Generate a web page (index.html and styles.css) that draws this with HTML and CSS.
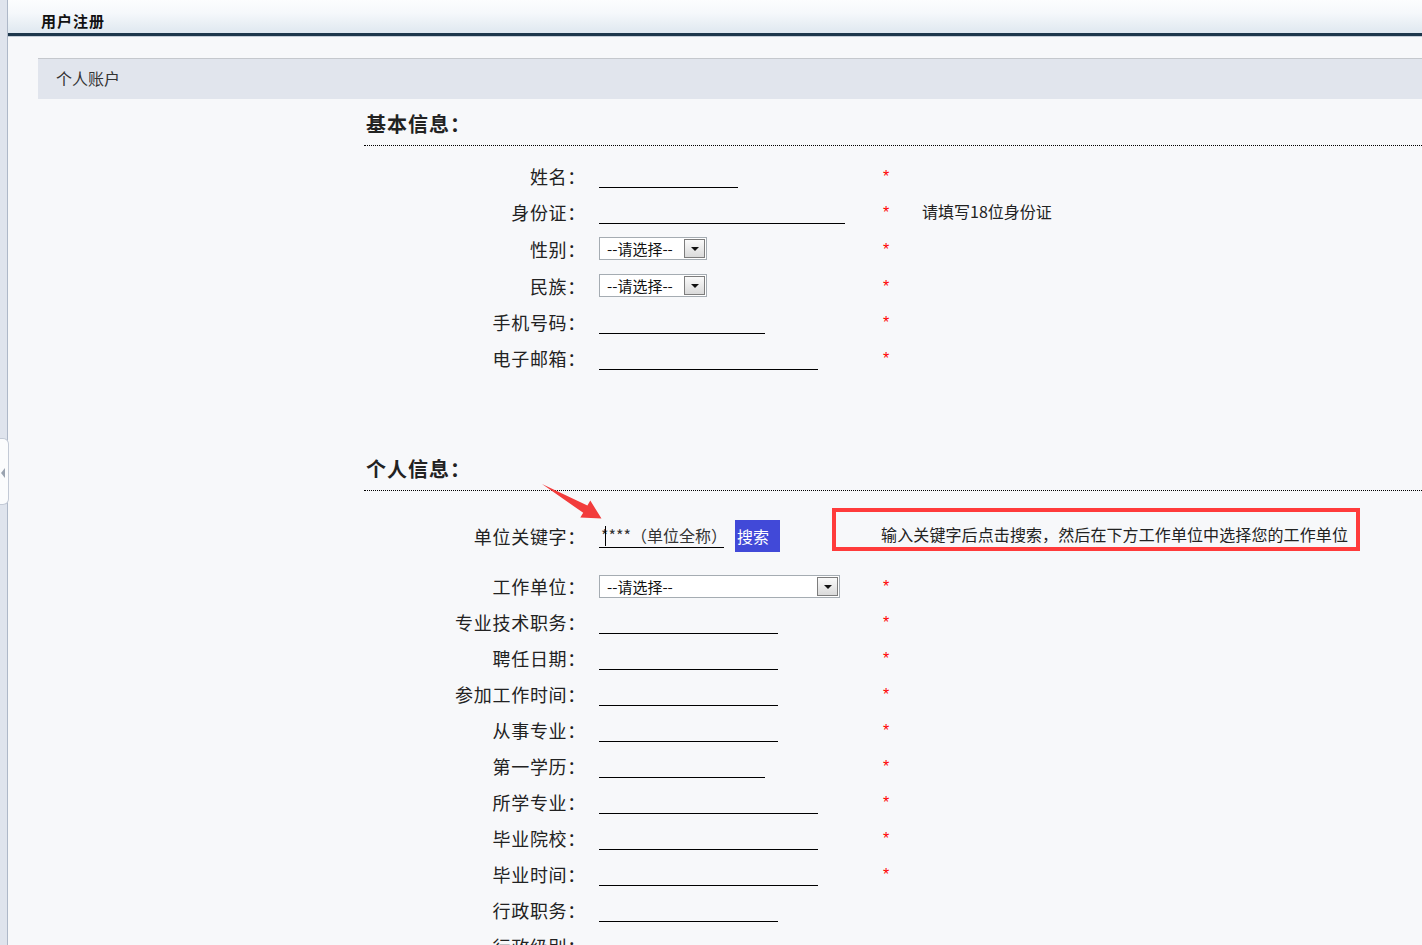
FILE: index.html
```html
<!DOCTYPE html>
<html lang="zh-CN">
  <head>
    <meta charset="UTF-8" />
    <meta name="viewport" content="width=device-width, initial-scale=1.0" />
    <title>用户注册</title>
    <link rel="stylesheet" href="styles.css">
  </head>
  <body>
    <div class="frame">
      <!-- 左侧折叠条 -->
      <div class="side"><span class="side-tab"></span></div>

      <div class="main">
        <div class="topbar"><h1>用户注册</h1></div>
        <div class="tab-bar">个人账户</div>

        <form class="reg-form" id="regForm">
          <h2 class="group-title">基本信息：</h2>
          <div class="rows">
            <div class="row">
              <label>姓名：</label>
              <div class="field"><input type="text" class="line" style="width: 139px" /></div>
              <span class="star">*</span>
            </div>
            <div class="row">
              <label>身份证：</label>
              <div class="field"><input type="text" class="line" style="width: 246px" /></div>
              <span class="star">*</span>
              <span class="hint">请填写18位身份证</span>
            </div>
            <div class="row row-select">
              <label>性别：</label>
              <div class="field">
                <div class="select"><span class="select-text">--请选择--</span><span class="select-btn"></span></div>
              </div>
              <span class="star">*</span>
            </div>
            <div class="row row-select">
              <label>民族：</label>
              <div class="field">
                <div class="select"><span class="select-text">--请选择--</span><span class="select-btn"></span></div>
              </div>
              <span class="star">*</span>
            </div>
            <div class="row">
              <label>手机号码：</label>
              <div class="field"><input type="text" class="line" style="width: 166px" /></div>
              <span class="star">*</span>
            </div>
            <div class="row">
              <label>电子邮箱：</label>
              <div class="field"><input type="text" class="line" style="width: 219px" /></div>
              <span class="star">*</span>
            </div>
          </div>

          <h2 class="group-title group-second">个人信息：</h2>
          <div class="rows">
            <div class="row row-keyword">
              <label>单位关键字：</label>
              <div class="field field-wide">
                <div class="keyword"><span class="caret"></span>****（单位全称）</div>
                <button type="button" class="search-btn">搜索</button>
                <div class="notice">输入关键字后点击搜索，然后在下方工作单位中选择您的工作单位</div>
              </div>
            </div>
            <div class="row">
              <label>工作单位：</label>
              <div class="field">
                <div class="select select-wide"><span class="select-text">--请选择--</span><span class="select-btn"></span></div>
              </div>
              <span class="star">*</span>
            </div>
            <div class="row">
              <label>专业技术职务：</label>
              <div class="field"><input type="text" class="line" style="width: 179px" /></div>
              <span class="star">*</span>
            </div>
            <div class="row">
              <label>聘任日期：</label>
              <div class="field"><input type="text" class="line" style="width: 179px" /></div>
              <span class="star">*</span>
            </div>
            <div class="row">
              <label>参加工作时间：</label>
              <div class="field"><input type="text" class="line" style="width: 179px" /></div>
              <span class="star">*</span>
            </div>
            <div class="row">
              <label>从事专业：</label>
              <div class="field"><input type="text" class="line" style="width: 179px" /></div>
              <span class="star">*</span>
            </div>
            <div class="row">
              <label>第一学历：</label>
              <div class="field"><input type="text" class="line" style="width: 166px" /></div>
              <span class="star">*</span>
            </div>
            <div class="row">
              <label>所学专业：</label>
              <div class="field"><input type="text" class="line" style="width: 219px" /></div>
              <span class="star">*</span>
            </div>
            <div class="row">
              <label>毕业院校：</label>
              <div class="field"><input type="text" class="line" style="width: 219px" /></div>
              <span class="star">*</span>
            </div>
            <div class="row">
              <label>毕业时间：</label>
              <div class="field"><input type="text" class="line" style="width: 219px" /></div>
              <span class="star">*</span>
            </div>
            <div class="row">
              <label>行政职务：</label>
              <div class="field"><input type="text" class="line" style="width: 179px" /></div>
            </div>
            <div class="row">
              <label>行政级别：</label>
              <div class="field"></div>
            </div>
          </div>
        </form>
      </div>

      <!-- 红色提示箭头 -->
      <svg class="arrow" width="64" height="40" viewBox="0 0 64 40">
        <polygon points="2,2 43.2,30.8 40.3,35.6 61.5,36.5 50.3,18.6 47.4,23.6" fill="#f23c3c" />
      </svg>
    </div>
  </body>
</html>
```

FILE: styles.css
```css
* {
  box-sizing: border-box;
}

html,
body {
  margin: 0;
  padding: 0;
  height: 100%;
  overflow: hidden;
}

body {
  font-family: "Noto Sans CJK SC", "Liberation Sans", sans-serif;
  color: #222;
  background: #f7f8fa;
}

.frame {
  position: relative;
  display: flex;
  min-height: 945px;
}

/* 左侧条 */
.side {
  position: relative;
  flex: 0 0 8px;
  background: #dfe4ed;
  border-right: 1px solid #aeb8c8;
}

.side-tab {
  position: absolute;
  top: 438px;
  left: 0;
  width: 9px;
  height: 67px;
  background: #fbfcfd;
  border: 1px solid #c3cad6;
  border-left: none;
  border-radius: 0 6px 6px 0;
}

.side-tab::before {
  content: "";
  position: absolute;
  top: 29px;
  left: 1px;
  border-top: 5px solid transparent;
  border-bottom: 5px solid transparent;
  border-right: 4px solid #9aa3b0;
}

.main {
  flex: 1;
  min-width: 0;
}

/* 顶部标题栏 */
.topbar {
  height: 36px;
  background: linear-gradient(to bottom, #fcfdfe 0%, #f5f8fb 40%, #dfe8f0 100%);
  border-bottom: 3px solid #1d374c;
  box-shadow: 0 1px 0 #c4cdd7;
}

.topbar h1 {
  margin: 0;
  padding: 6px 0 0 33px;
  font-size: 15px;
  line-height: 30px;
  letter-spacing: 1px;
  font-weight: bold;
  color: #111;
}

.tab-bar {
  margin: 22px 0 0 30px;
  height: 41px;
  padding-left: 18px;
  background: #e1e5ed;
  border-top: 1px solid #c5c8cd;
  font-size: 16px;
  line-height: 39px;
  color: #333;
}

.reg-form {
  margin-left: 356px;
}

.group-title {
  margin: 0;
  padding: 12px 0 8px 2px;
  font-size: 20px;
  line-height: 26px;
  letter-spacing: 1px;
  font-weight: bold;
  color: #222;
  border-bottom: 1px dotted #000;
}

.group-second {
  margin-top: 68px;
}

.rows {
  margin-top: 12px;
}

.row {
  display: grid;
  grid-template-columns: 235px 281px 42px 1fr;
  align-items: center;
  height: 36px;
}

.row-select {
  height: 37px;
}

.row label {
  padding-right: 13px;
  text-align: right;
  font-size: 18px;
  letter-spacing: 0.7px;
  color: #222;
  white-space: nowrap;
}

.field {
  display: flex;
  align-items: center;
}

input.line {
  height: 24px;
  padding: 0 2px;
  border: none;
  border-bottom: 1px solid #000;
  background: transparent;
  font-family: inherit;
  font-size: 15px;
  outline: none;
}

.star {
  padding: 2px 0 0 3px;
  font-family: "Liberation Sans", sans-serif;
  font-size: 16px;
  line-height: 18px;
  color: #ff0000;
}

.hint {
  padding-bottom: 2px;
  font-size: 16px;
  color: #222;
  white-space: nowrap;
}

/* 模拟下拉框 */
.select {
  display: flex;
  align-items: center;
  justify-content: space-between;
  width: 108px;
  height: 23px;
  padding: 1px;
  background: #fff;
  border: 1px solid #a5acb2;
}

.select-wide {
  width: 241px;
}

.select-text {
  padding-left: 6px;
  font-size: 15px;
  line-height: 19px;
  color: #111;
}

.select-btn {
  position: relative;
  width: 21px;
  height: 19px;
  background: linear-gradient(to bottom, #fafafa, #dadada);
  border: 1px solid #7d7d7d;
}

.select-btn::after {
  content: "";
  position: absolute;
  top: 7px;
  left: 6px;
  border-left: 4px solid transparent;
  border-right: 4px solid transparent;
  border-top: 4px solid #111;
}

/* 单位关键字 */
.row-keyword {
  height: 65px;
}

.field-wide {
  grid-column: 2 / -1;
  align-self: stretch;
}

.keyword {
  position: relative;
  width: 125px;
  height: 24px;
  padding-left: 2px;
  border-bottom: 1px solid #000;
  font-size: 16px;
  line-height: 22px;
  color: #333;
  white-space: nowrap;
}

.caret {
  position: absolute;
  top: 2px;
  left: 6px;
  width: 1px;
  height: 20px;
  background: #000;
}

.search-btn {
  width: 45px;
  height: 32px;
  margin-left: 11px;
  padding: 0 0 0 2px;
  border: none;
  background: #4149d8;
  color: #fff;
  font-family: inherit;
  font-size: 16px;
  text-align: left;
}

.notice {
  align-self: flex-start;
  width: 528px;
  height: 43px;
  margin: 5px 0 0 52px;
  padding: 9px 8px 0 0;
  border: 4px solid #ff3b3b;
  font-size: 16px;
  line-height: 26px;
  letter-spacing: 0.1px;
  text-align: right;
  white-space: nowrap;
  color: #222;
}

.arrow {
  position: absolute;
  top: 482px;
  left: 540px;
}
```
